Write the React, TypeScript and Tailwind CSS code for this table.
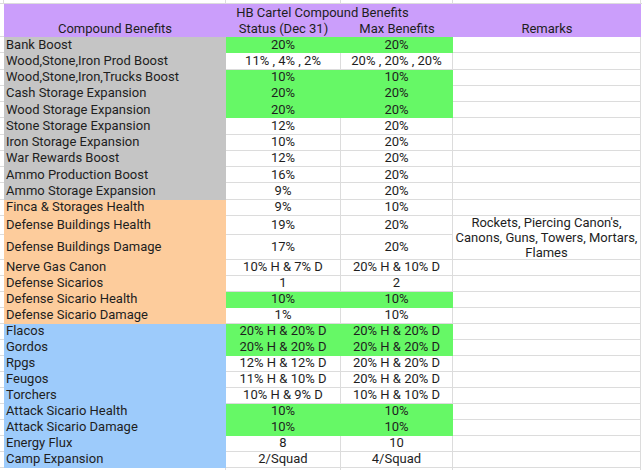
import React from "react";

type Row = {
  label: string;
  g: "gray" | "orange" | "blue";
  s: string;
  sg?: boolean;
  m: string;
  mg?: boolean;
  h?: string;
};

const rows: Row[] = [
  { label: "Bank Boost", g: "gray", s: "20%", sg: true, m: "20%", mg: true, h: "h-[16.25px]" },
  { label: "Wood,Stone,Iron Prod Boost", g: "gray", s: "11% , 4% , 2%", m: "20% , 20% , 20%", h: "h-[16.25px]" },
  { label: "Wood,Stone,Iron,Trucks Boost", g: "gray", s: "10%", sg: true, m: "10%", mg: true, h: "h-[16.25px]" },
  { label: "Cash Storage Expansion", g: "gray", s: "20%", sg: true, m: "20%", mg: true, h: "h-[16.25px]" },
  { label: "Wood Storage Expansion", g: "gray", s: "20%", sg: true, m: "20%", mg: true, h: "h-[16.25px]" },
  { label: "Stone Storage Expansion", g: "gray", s: "12%", m: "20%", h: "h-[16.25px]" },
  { label: "Iron Storage Expansion", g: "gray", s: "10%", m: "20%", h: "h-[16.25px]" },
  { label: "War Rewards Boost", g: "gray", s: "12%", m: "20%", h: "h-[16.25px]" },
  { label: "Ammo Production Boost", g: "gray", s: "16%", m: "20%", h: "h-[16.25px]" },
  { label: "Ammo Storage Expansion", g: "gray", s: "9%", m: "20%", h: "h-[16.25px]" },
  { label: "Finca & Storages Health", g: "orange", s: "9%", m: "10%" },
  { label: "Defense Buildings Health", g: "orange", s: "19%", m: "20%", h: "h-[19px]" },
  { label: "Defense Buildings Damage", g: "orange", s: "17%", m: "20%", h: "h-[25px]" },
  { label: "Nerve Gas Canon", g: "orange", s: "10% H & 7% D", m: "20% H & 10% D" },
  { label: "Defense Sicarios", g: "orange", s: "1", m: "2" },
  { label: "Defense Sicario Health", g: "orange", s: "10%", sg: true, m: "10%", mg: true },
  { label: "Defense Sicario Damage", g: "orange", s: "1%", m: "10%" },
  { label: "Flacos", g: "blue", s: "20% H & 20% D", sg: true, m: "20% H & 20% D", mg: true },
  { label: "Gordos", g: "blue", s: "20% H & 20% D", sg: true, m: "20% H & 20% D", mg: true },
  { label: "Rpgs", g: "blue", s: "12% H & 12% D", m: "20% H & 20% D" },
  { label: "Feugos", g: "blue", s: "11% H & 10% D", m: "20% H & 20% D" },
  { label: "Torchers", g: "blue", s: "10% H & 9% D", m: "10% H & 10% D" },
  { label: "Attack Sicario Health", g: "blue", s: "10%", sg: true, m: "10%", mg: true },
  { label: "Attack Sicario Damage", g: "blue", s: "10%", sg: true, m: "10%", mg: true },
  { label: "Energy Flux", g: "blue", s: "8", m: "10" },
  { label: "Camp Expansion", g: "blue", s: "2/Squad", m: "4/Squad" },
];

const groupCls: Record<Row["g"], string> = {
  gray: "bg-[#c5c5c5] border-[#c5c5c5]",
  orange: "bg-[#fdcc9c] border-[#fdcc9c]",
  blue: "bg-[#9dcbfb] border-[#9dcbfb]",
};

const white = "bg-white border-[#dcdcdc]";
const green = "bg-[#66f866] border-[#66f866]";

export default function App() {
  return (
    <div
      className="w-[642px] h-[470px] overflow-hidden bg-white text-[13px] leading-[16px] text-[#1e1e1e]"
      style={{ fontFamily: "Roboto, 'Liberation Sans', sans-serif" }}
    >
      {/* top partial row */}
      <div className="grid grid-cols-[4px_222px_115px_112px_188px_1px] h-[4px]">
        <div className="border-b border-r border-[#dcdcdc]" />
        <div className="border-b border-r border-[#dcdcdc]" />
        <div className="border-b border-r border-[#dcdcdc]" />
        <div className="border-b border-r border-[#dcdcdc]" />
        <div className="border-b border-r border-[#dcdcdc]" />
        <div className="border-b border-[#dcdcdc]" />
      </div>
      {/* header */}
      <div className="flex h-[33px]">
        <div className="w-[4px] border-b border-[#dcdcdc]" />
        <div className="w-[637px] bg-[#cb9efb] flex flex-col">
          <div className="h-[16px] text-center pt-[1px]">HB Cartel Compound Benefits</div>
          <div className="grid grid-cols-[222px_115px_112px_188px] h-[17px] items-center">
            <div className="text-center">Compound Benefits</div>
            <div className="text-center">Status (Dec 31)</div>
            <div className="text-center">Max Benefits</div>
            <div className="text-center">Remarks</div>
          </div>
        </div>
        <div className="w-[1px]" />
      </div>
      {/* data */}
      <div className="grid grid-cols-[4px_222px_115px_112px_188px_1px]">
        {rows.map((r, i) => {
          const h = r.h ?? "h-[16px]";
          return (
            <React.Fragment key={i}>
              <div className={`${h} border-b border-[#dcdcdc]`} />
              <div className={`${h} ${groupCls[r.g]} border-b border-r pl-[2px] flex items-center whitespace-nowrap`}>
                {r.label}
              </div>
              <div className={`${h} ${r.sg ? green : white} border-b border-r flex items-center justify-center whitespace-nowrap`}>
                {r.s}
              </div>
              <div className={`${h} ${r.mg ? green : white} border-b border-r flex items-center justify-center whitespace-nowrap`}>
                {r.m}
              </div>
              {i === 11 ? (
                <div className="row-span-2 h-[44px] border-b border-r border-[#dcdcdc] flex items-center justify-center text-center leading-[15px]">
                  <span>
                    Rockets, Piercing Canon's,
                    <br />
                    Canons, Guns, Towers, Mortars,
                    <br />
                    Flames
                  </span>
                </div>
              ) : i === 12 ? null : (
                <div className={`${h} border-b border-r border-[#dcdcdc]`} />
              )}
              <div className={`${h}`} />
            </React.Fragment>
          );
        })}
        <div className="h-[4px]" />
        <div className="h-[4px] border-r border-[#dcdcdc]" />
        <div className="h-[4px] border-r border-[#dcdcdc]" />
        <div className="h-[4px] border-r border-[#dcdcdc]" />
        <div className="h-[4px] border-r border-[#dcdcdc]" />
        <div className="h-[4px]" />
      </div>
    </div>
  );
}
